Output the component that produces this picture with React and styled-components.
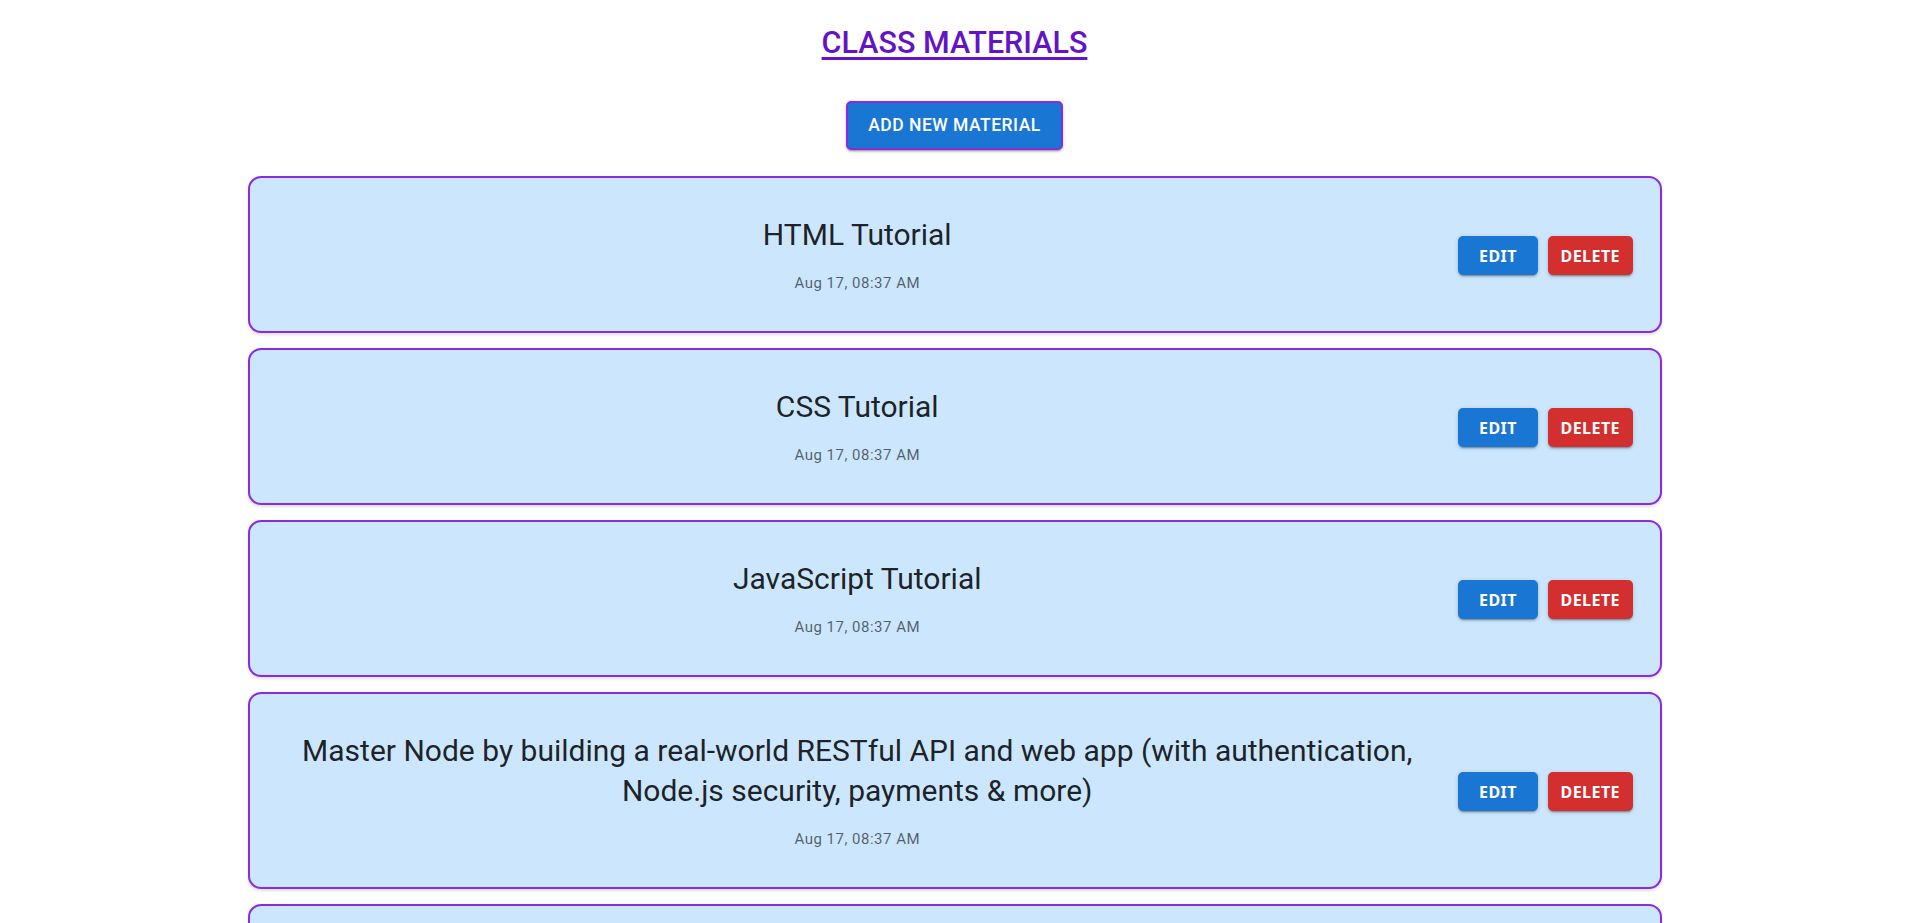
import React from "react";
import styled, { createGlobalStyle } from "styled-components";

const GlobalStyle = createGlobalStyle`
  body {
    margin: 0;
    background: #ffffff;
    font-family: Roboto, "Liberation Sans", sans-serif;
  }
`;

const Page = styled.main`
  display: flex;
  flex-direction: column;
  align-items: center;
  padding-top: 23px;
  padding-left: 2px;
`;

const Title = styled.h1`
  margin: 0;
  font-size: 30.5px;
  line-height: 40px;
  font-weight: 500;
  color: #6413c6;
  text-decoration: underline;
  text-decoration-thickness: 3px;
  text-underline-offset: 4px;
`;

const AddBtn = styled.button`
  margin-top: 38px;
  padding: 12px 20px;
  border: 2px solid #8a2be2;
  border-radius: 5px;
  background: #1976d2;
  color: #ffffff;
  font-family: Roboto, sans-serif;
  font-size: 17.5px;
  line-height: 21px;
  font-weight: 500;
  letter-spacing: 0.02857em;
  text-transform: uppercase;
  box-shadow: 0 3px 1px -2px rgba(0, 0, 0, 0.2), 0 2px 2px 0 rgba(0, 0, 0, 0.14),
    0 1px 5px 0 rgba(0, 0, 0, 0.12);
  cursor: pointer;
`;

const List = styled.div`
  width: 1414px;
  margin-top: 26px;
  display: flex;
  flex-direction: column;
  gap: 15px;
`;

const Card = styled.div`
  display: flex;
  align-items: center;
  gap: 20px;
  padding: 37px 27px 35px;
  background: #cbe6fd;
  border: 2px solid #8a2be2;
  border-radius: 13px;
  box-shadow: 0 2px 3px rgba(0, 0, 0, 0.12);
`;

const Content = styled.div`
  flex: 1;
  text-align: center;
`;

const Name = styled.div`
  font-size: 30px;
  line-height: 40px;
  font-weight: 400;
  color: rgba(0, 0, 0, 0.87);
  margin-bottom: 16px;
`;

const Date = styled.div`
  font-size: 15px;
  line-height: 25px;
  letter-spacing: 0.03333em;
  color: rgba(0, 0, 0, 0.6);
`;

const Actions = styled.div`
  display: flex;
  gap: 10px;
`;

const SmallBtn = styled.button`
  min-width: 80px;
  height: 39px;
  padding: 0 12.5px;
  border: none;
  border-radius: 5px;
  background: ${(p) => (p.$danger ? "#d32f2f" : "#1976d2")};
  color: #ffffff;
  font-family: "Noto Sans", "Open Sans", sans-serif;
  font-size: 16px;
  font-weight: 700;
  letter-spacing: 0.02857em;
  text-transform: uppercase;
  box-shadow: 0 3px 1px -2px rgba(0, 0, 0, 0.2), 0 2px 2px 0 rgba(0, 0, 0, 0.14),
    0 1px 5px 0 rgba(0, 0, 0, 0.12);
  cursor: pointer;
`;

const materials = [
  { id: 1, title: "HTML Tutorial", date: "Aug 17, 08:37 AM" },
  { id: 2, title: "CSS Tutorial", date: "Aug 17, 08:37 AM" },
  { id: 3, title: "JavaScript Tutorial", date: "Aug 17, 08:37 AM" },
  {
    id: 4,
    title:
      "Master Node by building a real-world RESTful API and web app (with authentication, Node.js security, payments & more)",
    date: "Aug 17, 08:37 AM",
  },
  { id: 5, title: "React Tutorial", date: "Aug 17, 08:37 AM" },
];

function App() {
  return (
    <>
      <GlobalStyle />
      <Page>
        <Title>CLASS MATERIALS</Title>
        <AddBtn>Add New Material</AddBtn>
        <List>
          {materials.map((m) => (
            <Card key={m.id}>
              <Content>
                <Name>{m.title}</Name>
                <Date>{m.date}</Date>
              </Content>
              <Actions>
                <SmallBtn>Edit</SmallBtn>
                <SmallBtn $danger>Delete</SmallBtn>
              </Actions>
            </Card>
          ))}
        </List>
      </Page>
    </>
  );
}

export default App;
